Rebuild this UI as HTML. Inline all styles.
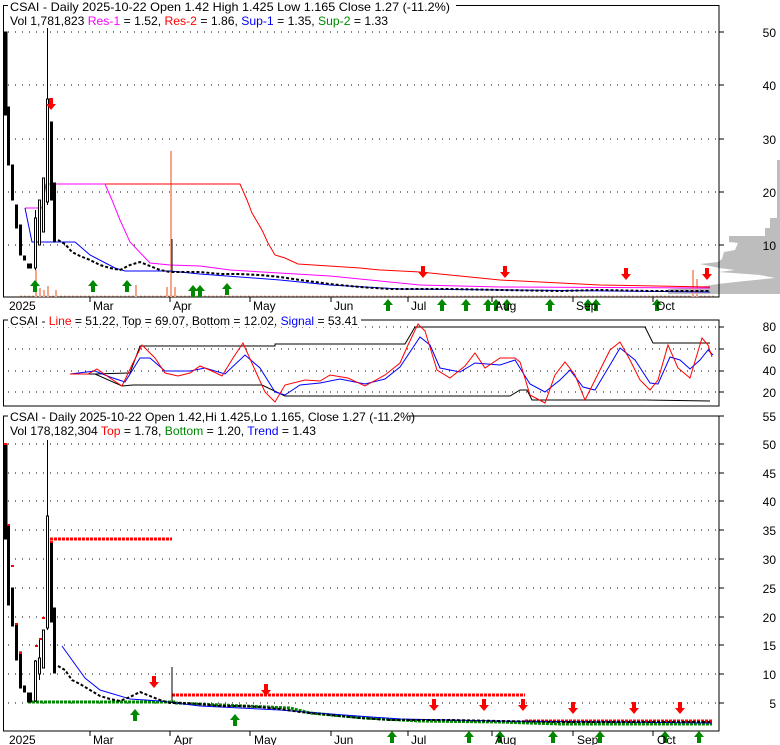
<!DOCTYPE html>
<html><head><meta charset="utf-8"><style>
html,body{margin:0;padding:0;background:#fff;}
svg{display:block;font-family:"Liberation Sans",sans-serif;}
</style></head><body>
<svg width="780" height="745" viewBox="0 0 780 745" xmlns="http://www.w3.org/2000/svg">
<defs>
<g id="up"><path d="M-2,0 L2,0 L2,-6 L5,-6 L0,-12 L-5,-6 L-2,-6 Z" fill="#008800"/></g>
<g id="dn"><path d="M-2,0 L2,0 L2,6 L5,6 L0,12 L-5,6 L-2,6 Z" fill="#ff0000"/></g>
</defs>

<!-- ============ PANEL 1 ============ -->
<polygon fill="#bdbdbd" points="777,160 777,218 770,218 770,228 765,228 765,236 729,236 729,242 738,243 735,250 724,252 722,259 718,262 700,264 719,268 735,270 719,272 760,275 775,278 745,281 718,284 700,287 668,289 668,294 780,294 780,160"/>
<rect x="3.5" y="5.5" width="715.5" height="291.5" fill="none" stroke="#000"/>
<g stroke="#000" stroke-dasharray="1,6" stroke-width="1">
<line x1="8" y1="32" x2="718" y2="32"/><line x1="8" y1="85" x2="718" y2="85"/><line x1="8" y1="139" x2="718" y2="139"/><line x1="8" y1="192" x2="718" y2="192"/><line x1="8" y1="245" x2="718" y2="245"/>
</g>
<g stroke="#000"><line x1="719" y1="32" x2="724" y2="32"/><line x1="719" y1="85" x2="724" y2="85"/><line x1="719" y1="139" x2="724" y2="139"/><line x1="719" y1="192" x2="724" y2="192"/><line x1="719" y1="245" x2="724" y2="245"/></g>
<g font-size="12" fill="#000" text-anchor="end">
<text x="776" y="37">50</text><text x="776" y="90">40</text><text x="776" y="144">30</text><text x="776" y="197">20</text><text x="776" y="250">10</text>
</g>
<g fill="#f4a58a">
<rect x="170" y="151" width="2" height="146"/>
<rect x="35" y="270" width="2" height="27"/><rect x="39" y="288" width="2" height="9"/><rect x="43" y="290" width="2" height="7"/><rect x="47" y="286" width="2" height="11"/><rect x="55" y="290" width="2" height="7"/>
<rect x="135" y="285" width="2" height="12"/><rect x="166" y="287" width="2" height="10"/><rect x="174" y="287" width="2" height="10"/>
<rect x="692" y="270" width="2" height="27"/><rect x="696" y="279" width="2" height="18"/>
</g>
<g stroke="#f4a58a" stroke-dasharray="2,2"><line x1="20" y1="296" x2="715" y2="296"/></g>
<polyline fill="none" stroke="#ff0000" points="50,184 240,184 247,200 252,213 262,230 268,243 275,255 285,258 298,264 360,268 380,270 420,272 500,280 600,285 710,287"/>
<polyline fill="none" stroke="#ff00ff" points="25,208 42,208 46,184 105,184 112,200 120,220 130,242 150,263 170,265 200,266 230,270 330,276 380,281 420,285 500,287 710,288"/>
<polyline fill="none" stroke="#0000ff" points="25,208 32,242 75,242 90,255 115,268 125,271 170,271 200,274 280,280 330,285 400,289 710,292"/>
<g stroke="#000" stroke-width="1">
<rect x="4" y="32" width="3" height="83" fill="#000"/>
<rect x="7.5" y="107" width="2" height="58" fill="#000"/>
<rect x="11.5" y="165" width="2" height="35" fill="#000"/>
<rect x="15.5" y="205" width="2" height="23" fill="#000"/>
<rect x="19.5" y="225" width="2" height="30" fill="#000"/>
<rect x="23.5" y="256" width="2" height="4" fill="#000"/>
<rect x="27.5" y="264" width="4" height="4" fill="#000"/>
<line x1="35.5" y1="210" x2="35.5" y2="270"/><rect x="34.5" y="218" width="2" height="50" fill="#fff"/>
<rect x="38.5" y="200" width="2" height="45" fill="#fff"/>
<rect x="42.5" y="178" width="2" height="54" fill="#fff"/>
<line x1="47.5" y1="28" x2="47.5" y2="205"/><rect x="46.5" y="99" width="2" height="103" fill="#fff"/>
<rect x="50.5" y="122" width="2" height="78" fill="#000"/>
<rect x="53.5" y="183" width="2" height="59" fill="#000"/>
</g>
<polyline fill="none" stroke="#000" stroke-width="2" stroke-dasharray="3,2" points="58,240 65,244 72,252 80,256 90,260 100,265 110,268 120,270 130,265 140,262 150,266 160,270 170,272 180,272 200,272 220,274 240,274 260,275 280,277 300,280 330,284 360,287 390,289 450,289 500,290 560,291 600,290 650,291 710,291"/>
<line x1="172" y1="239" x2="172" y2="272" stroke="#000"/>
<g>
<use href="#up" x="35" y="292"/><use href="#up" x="93" y="292"/><use href="#up" x="127" y="292"/><use href="#up" x="193" y="297"/><use href="#up" x="200" y="297"/><use href="#up" x="227" y="295"/>
<use href="#up" x="388" y="311"/><use href="#up" x="442" y="311"/><use href="#up" x="466" y="311"/><use href="#up" x="488" y="311"/><use href="#up" x="496" y="311"/><use href="#up" x="507" y="311"/><use href="#up" x="550" y="311"/><use href="#up" x="588" y="311"/><use href="#up" x="596" y="311"/><use href="#up" x="657" y="311"/>
<use href="#dn" x="51" y="98"/><use href="#dn" x="423" y="266"/><use href="#dn" x="505" y="266"/><use href="#dn" x="626" y="268"/><use href="#dn" x="707" y="268"/>
</g>
<g stroke="#000"><line x1="90" y1="297" x2="90" y2="302"/><line x1="170" y1="297" x2="170" y2="302"/><line x1="250" y1="297" x2="250" y2="302"/><line x1="331" y1="297" x2="331" y2="302"/><line x1="408" y1="297" x2="408" y2="302"/><line x1="492" y1="297" x2="492" y2="302"/><line x1="573" y1="297" x2="573" y2="302"/><line x1="653" y1="297" x2="653" y2="302"/></g>
<g font-size="12" fill="#000">
<text x="9" y="310">2025</text><text x="93" y="310">Mar</text><text x="173" y="310">Apr</text><text x="253" y="310">May</text><text x="334" y="310">Jun</text><text x="411" y="310">Jul</text><text x="495" y="310">Aug</text><text x="576" y="310">Sep</text><text x="656" y="310">Oct</text>
</g>
<rect x="8" y="0" width="448" height="13" fill="#fff"/>
<text x="10" y="11" font-size="12" textLength="440" lengthAdjust="spacingAndGlyphs">CSAI - Daily 2025-10-22 Open 1.42  High 1.425  Low 1.165  Close 1.27 (-11.2%)</text>
<text x="10" y="25" font-size="12" textLength="378" lengthAdjust="spacingAndGlyphs">Vol 1,781,823 <tspan fill="#ff00ff">Res-1</tspan> = 1.52, <tspan fill="#ff0000">Res-2</tspan> = 1.86, <tspan fill="#0000ff">Sup-1</tspan> = 1.35, <tspan fill="#008800">Sup-2</tspan> = 1.33</text>

<!-- ============ PANEL 2 ============ -->
<rect x="3.5" y="320" width="715.5" height="86" fill="none" stroke="#000"/>
<g stroke="#000" stroke-dasharray="1,6"><line x1="8" y1="327" x2="718" y2="327"/><line x1="8" y1="349" x2="718" y2="349"/><line x1="8" y1="371" x2="718" y2="371"/><line x1="8" y1="392" x2="718" y2="392"/></g>
<g stroke="#000"><line x1="719" y1="327" x2="724" y2="327"/><line x1="719" y1="349" x2="724" y2="349"/><line x1="719" y1="371" x2="724" y2="371"/><line x1="719" y1="392" x2="724" y2="392"/></g>
<g font-size="12" fill="#000" text-anchor="end"><text x="776" y="331">80</text><text x="776" y="353">60</text><text x="776" y="375">40</text><text x="776" y="397">20</text></g>
<polyline fill="none" stroke="#000" points="70,374 95,374 130,373 140,346 275,346 275,344 405,344 415,327 645,327 653,343 710,343"/>
<polyline fill="none" stroke="#000" points="70,374 95,374 122,386 133,385 262,385 285,396 510,396 520,390 527,390 532,400 645,400 710,401"/>
<polyline fill="none" stroke="#0000ff" points="70,374 95,371 110,377 125,382 140,358 150,358 165,371 190,371 205,368 225,374 245,355 260,368 275,392 285,395 300,385 320,383 340,379 365,384 385,379 400,367 420,337 430,345 440,368 460,372 475,363 500,365 515,360 530,384 545,392 560,380 570,370 583,387 595,390 610,365 620,348 635,360 650,383 658,384 670,357 680,360 690,369 700,360 708,350 713,355"/>
<polyline fill="none" stroke="#ff0000" points="70,374 88,374 97,369 107,376 122,386 132,365 142,345 155,358 165,373 178,376 190,373 200,366 212,371 222,376 233,358 243,343 255,370 265,392 275,402 285,385 305,380 320,381 330,375 348,378 365,386 385,375 400,363 408,345 418,324 425,331 437,370 450,378 465,366 475,353 485,368 500,358 515,358 520,362 530,395 545,403 555,375 565,362 575,375 585,400 595,380 610,350 620,342 630,360 640,380 650,390 658,380 668,345 678,368 690,378 702,338 708,345 712,357"/>
<rect x="8" y="314" width="353" height="13" fill="#fff"/>
<text x="10" y="325" font-size="12" textLength="348" lengthAdjust="spacingAndGlyphs">CSAI - <tspan fill="#ff0000">Line</tspan> = 51.22, Top = 69.07, Bottom = 12.02, <tspan fill="#0000ff">Signal</tspan> = 53.41</text>

<!-- ============ PANEL 3 ============ -->
<rect x="3.5" y="416" width="715.5" height="315" fill="none" stroke="#000"/>
<g stroke="#000" stroke-dasharray="1,6">
<line x1="8" y1="444" x2="718" y2="444"/><line x1="8" y1="473" x2="718" y2="473"/><line x1="8" y1="501" x2="718" y2="501"/><line x1="8" y1="530" x2="718" y2="530"/><line x1="8" y1="559" x2="718" y2="559"/><line x1="8" y1="588" x2="718" y2="588"/><line x1="8" y1="617" x2="718" y2="617"/><line x1="8" y1="645" x2="718" y2="645"/><line x1="8" y1="674" x2="718" y2="674"/><line x1="8" y1="703" x2="718" y2="703"/>
</g>
<g stroke="#000"><line x1="719" y1="416" x2="724" y2="416"/><line x1="719" y1="444" x2="724" y2="444"/><line x1="719" y1="473" x2="724" y2="473"/><line x1="719" y1="501" x2="724" y2="501"/><line x1="719" y1="530" x2="724" y2="530"/><line x1="719" y1="559" x2="724" y2="559"/><line x1="719" y1="588" x2="724" y2="588"/><line x1="719" y1="617" x2="724" y2="617"/><line x1="719" y1="645" x2="724" y2="645"/><line x1="719" y1="674" x2="724" y2="674"/><line x1="719" y1="703" x2="724" y2="703"/></g>
<g font-size="12" fill="#000" text-anchor="end">
<text x="776" y="421">55</text><text x="776" y="449">50</text><text x="776" y="478">45</text><text x="776" y="506">40</text><text x="776" y="535">35</text><text x="776" y="564">30</text><text x="776" y="593">25</text><text x="776" y="622">20</text><text x="776" y="650">15</text><text x="776" y="679">10</text><text x="776" y="708">5</text>
</g>
<g stroke-width="3" stroke-dasharray="3,1">
<line x1="50" y1="539" x2="172" y2="539" stroke="#ff0000"/>
<line x1="172" y1="695" x2="525" y2="695" stroke="#ff0000"/>
<line x1="525" y1="721" x2="712" y2="721" stroke="#ff0000"/>
<line x1="28" y1="702" x2="175" y2="702" stroke="#008800"/>
<polyline fill="none" stroke="#008800" points="175,703 290,708 310,713 365,718 420,721 500,722 560,724 712,724"/>
</g>
<polyline fill="none" stroke="#0000ff" points="62,646 72,660 85,678 100,690 130,699 160,701 200,706 280,710 330,714 400,719 500,721 712,723"/>
<g stroke="#000" stroke-width="1">
<rect x="4" y="444" width="3" height="95" fill="#000"/>
<rect x="7.5" y="525" width="2" height="80" fill="#000"/>
<rect x="11.5" y="588" width="2" height="38" fill="#000"/>
<rect x="15.5" y="625" width="2" height="35" fill="#000"/>
<rect x="19.5" y="652" width="2" height="36" fill="#000"/>
<rect x="23.5" y="686" width="2" height="6" fill="#000"/>
<rect x="27.5" y="693" width="4" height="9" fill="#000"/>
<line x1="35.5" y1="660" x2="35.5" y2="702"/><rect x="34.5" y="661" width="2" height="40" fill="#fff"/>
<line x1="39.5" y1="640" x2="39.5" y2="680"/><rect x="38.5" y="658" width="2" height="16" fill="#fff"/>
<rect x="42.5" y="630" width="2" height="38" fill="#fff"/>
<line x1="47.5" y1="440" x2="47.5" y2="630"/><rect x="46.5" y="516" width="2" height="112" fill="#fff"/>
<rect x="50.5" y="542" width="2" height="80" fill="#000"/>
<rect x="53.5" y="608" width="2" height="65" fill="#000"/>
</g>
<g fill="#ff0000"><rect x="4" y="443" width="3" height="2"/><rect x="7" y="524" width="3" height="2"/><rect x="11" y="565" width="3" height="2"/><rect x="15" y="623" width="3" height="2"/><rect x="19" y="652" width="3" height="2"/><rect x="35" y="645" width="3" height="2"/><rect x="39" y="638" width="3" height="2"/><rect x="42" y="617" width="3" height="2"/><rect x="50" y="541" width="3" height="2"/></g>
<polyline fill="none" stroke="#000" stroke-width="2" stroke-dasharray="3,2" points="58,666 65,670 72,680 80,684 90,690 100,696 110,699 120,701 130,697 140,692 150,696 160,700 170,703 180,703 200,704 220,706 240,706 260,707 280,709 300,712 330,715 360,718 390,720 450,720 500,721 560,722 600,722 650,722 710,722"/>
<line x1="172" y1="667" x2="172" y2="703" stroke="#000"/>
<g>
<use href="#dn" x="154" y="676"/><use href="#dn" x="266" y="684"/><use href="#dn" x="434" y="699"/><use href="#dn" x="484" y="699"/><use href="#dn" x="523" y="699"/><use href="#dn" x="573" y="702"/><use href="#dn" x="634" y="702"/><use href="#dn" x="680" y="702"/>
<use href="#up" x="135" y="721"/><use href="#up" x="235" y="726"/><use href="#up" x="392" y="743"/><use href="#up" x="469" y="743"/><use href="#up" x="500" y="743"/><use href="#up" x="553" y="743"/><use href="#up" x="600" y="743"/><use href="#up" x="665" y="743"/><use href="#up" x="699" y="743"/>
</g>
<g stroke="#000"><line x1="90" y1="731" x2="90" y2="736"/><line x1="170" y1="731" x2="170" y2="736"/><line x1="250" y1="731" x2="250" y2="736"/><line x1="331" y1="731" x2="331" y2="736"/><line x1="408" y1="731" x2="408" y2="736"/><line x1="492" y1="731" x2="492" y2="736"/><line x1="573" y1="731" x2="573" y2="736"/><line x1="653" y1="731" x2="653" y2="736"/></g>
<g font-size="12" fill="#000">
<text x="9" y="744">2025</text><text x="93" y="744">Mar</text><text x="174" y="744">Apr</text><text x="254" y="744">May</text><text x="334" y="744">Jun</text><text x="411" y="744">Jul</text><text x="495" y="744">Aug</text><text x="577" y="744">Sep</text><text x="657" y="744">Oct</text>
</g>
<rect x="8" y="410" width="400" height="13" fill="#fff"/>
<text x="10" y="421" font-size="12" textLength="405" lengthAdjust="spacingAndGlyphs">CSAI - Daily 2025-10-22 Open 1.42,Hi 1.425,Lo 1.165, Close 1.27 (-11.2%)</text>
<text x="10" y="435" font-size="12" textLength="306" lengthAdjust="spacingAndGlyphs">Vol 178,182,304 <tspan fill="#ff0000">Top</tspan> = 1.78, <tspan fill="#008800">Bottom</tspan> = 1.20, <tspan fill="#0000ff">Trend</tspan> = 1.43</text>
</svg>
</body></html>
